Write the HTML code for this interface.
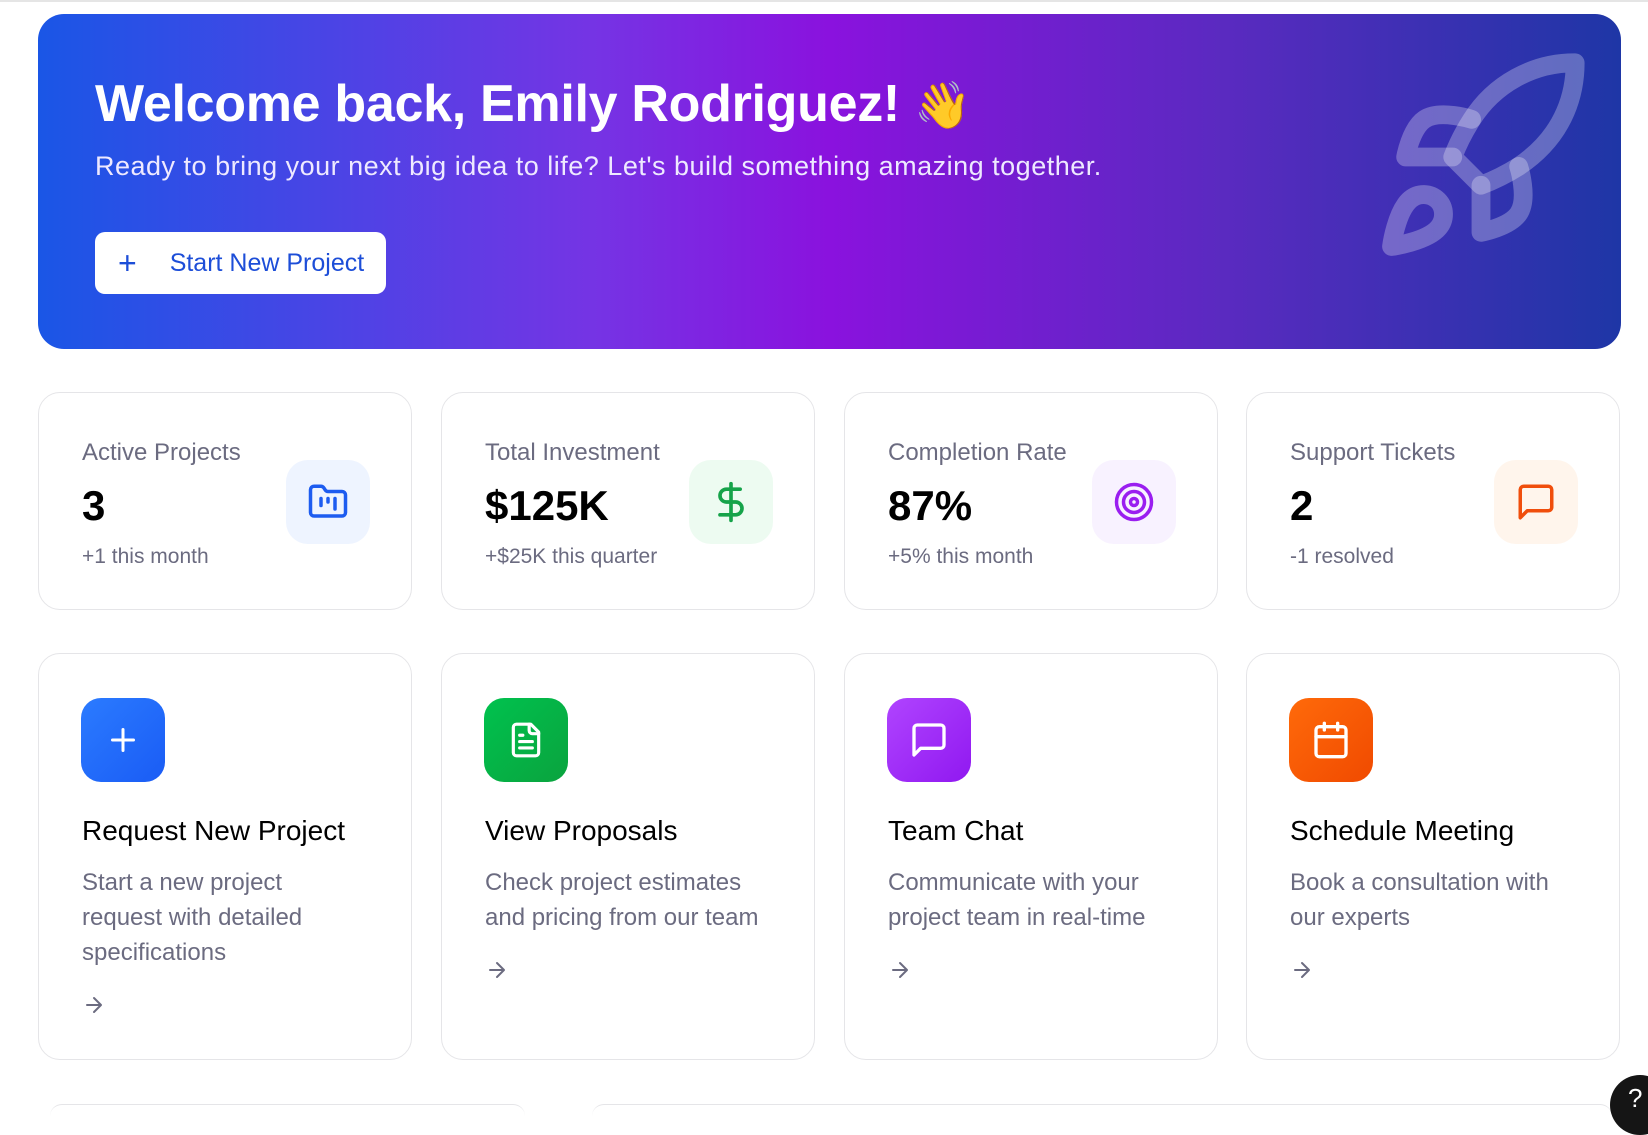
<!DOCTYPE html>
<html><head><meta charset="utf-8"><style>
*{box-sizing:border-box;margin:0;padding:0}
body{width:1648px;height:1105px;overflow:hidden;background:#fff;font-family:"Liberation Sans",sans-serif;position:relative;border-top:2px solid #e5e5e5}
.banner{position:absolute;left:38px;top:12px;width:1583px;height:335px;border-radius:26px;background:linear-gradient(90deg,#1a56e6 0%,#7534e4 35%,#8a12de 50%,#5a2ac0 75%,#1e36a6 100%);overflow:hidden}
.banner h1{position:absolute;left:57px;top:60px;font-size:52px;font-weight:700;color:#fff;letter-spacing:-0.3px}
.banner p{position:absolute;left:57px;top:137px;font-size:27px;letter-spacing:0.5px;color:#eee9ff}
.btn{position:absolute;left:57px;top:218px;width:291px;height:62px;background:#fff;border-radius:10px;color:#1d4ed8;font-size:25px;display:flex;align-items:center}
.btn span.p{font-size:32px;margin:0 33px 0 23px;font-weight:300;line-height:1}
.rocket{position:absolute;left:1330px;top:30px}
.card{position:absolute;border:1px solid #e5e5e8;border-radius:22px;background:#fff}
.stat{top:390px;width:374px;height:218px}
.stat .l{position:absolute;left:43px;top:46px;font-size:24px;color:#6b6b80}
.stat .v{position:absolute;left:43px;top:89px;font-size:42px;font-weight:700;color:#000}
.stat .s{position:absolute;left:43px;top:152px;font-size:21px;color:#6b6b80}
.stat .ic{position:absolute;left:247px;top:67px;width:84px;height:84px;border-radius:22px;display:flex;align-items:center;justify-content:center}
.act{top:651px;width:374px;height:407px}
.act .ic{position:absolute;left:42px;top:44px;width:84px;height:84px;border-radius:20px;display:flex;align-items:center;justify-content:center}
.act .t{position:absolute;left:43px;top:161px;font-size:28px;color:#000}
.act .d{position:absolute;left:43px;top:211px;width:286px;font-size:24px;line-height:35px;color:#6b6b80}
.act .a{position:absolute;left:43px}
</style></head><body>
<div class="banner">
<h1>Welcome back, Emily Rodriguez! <span style="font-family:'Noto Color Emoji','DejaVu Sans',sans-serif;font-size:46px">👋</span></h1>
<p>Ready to bring your next big idea to life? Let's build something amazing together.</p>
<div class="btn"><span class="p">+</span>Start New Project</div>
<svg class="rocket" width="226" height="226" viewBox="0 0 24 24" fill="none" stroke="rgba(255,255,255,0.28)" stroke-width="2" stroke-linecap="round" stroke-linejoin="round"><path d="M4.5 16.5c-1.5 1.26-2 5-2 5s3.74-.5 5-2c.71-.84.7-2.13-.09-2.91a2.18 2.18 0 0 0-2.91-.09z"/><path d="M12 15l-3-3a22 22 0 0 1 2-3.95A12.88 12.88 0 0 1 22 2c0 2.72-.78 7.5-6 11a22.35 22.35 0 0 1-4 2z"/><path d="M9 12H4s.55-3.03 2-4c1.62-1.08 5 0 5 0"/><path d="M12 15v5s3.03-.55 4-2c1.08-1.620 0-5 0-5"/></svg>
</div>

<div class="card stat" style="left:38px"><div class="l">Active Projects</div><div class="v">3</div><div class="s">+1 this month</div>
<div class="ic" style="background:#eef4ff"><svg width="42" height="42" viewBox="0 0 24 24" fill="none" stroke="#1d5cf0" stroke-width="2" stroke-linecap="round" stroke-linejoin="round"><path d="M4 20h16a2 2 0 0 0 2-2V8a2 2 0 0 0-2-2h-7.9a2 2 0 0 1-1.7-.9l-.8-1.2A2 2 0 0 0 7.9 3H4a2 2 0 0 0-2 2v13a2 2 0 0 0 2 2z"/><path d="M8 10v4M12 10v2M16 10v6"/></svg></div></div>
<div class="card stat" style="left:441px"><div class="l">Total Investment</div><div class="v">$125K</div><div class="s">+$25K this quarter</div>
<div class="ic" style="background:#edfbf1"><svg width="44" height="44" viewBox="0 0 24 24" fill="none" stroke="#16a34a" stroke-width="2" stroke-linecap="round" stroke-linejoin="round"><path d="M12 2v20M17 5H9.5a3.5 3.5 0 0 0 0 7h5a3.5 3.5 0 0 1 0 7H6"/></svg></div></div>
<div class="card stat" style="left:844px"><div class="l">Completion Rate</div><div class="v">87%</div><div class="s">+5% this month</div>
<div class="ic" style="background:#f8f2ff"><svg width="42" height="42" viewBox="0 0 24 24" fill="none" stroke="#9a1ef0" stroke-width="2"><circle cx="12" cy="12" r="10"/><circle cx="12" cy="12" r="6"/><circle cx="12" cy="12" r="2"/></svg></div></div>
<div class="card stat" style="left:1246px"><div class="l">Support Tickets</div><div class="v">2</div><div class="s">-1 resolved</div>
<div class="ic" style="background:#fff5ec"><svg width="42" height="42" viewBox="0 0 24 24" fill="none" stroke="#f04e0c" stroke-width="2" stroke-linecap="round" stroke-linejoin="round"><path d="M21 15a2 2 0 0 1-2 2H7l-4 4V5a2 2 0 0 1 2-2h14a2 2 0 0 1 2 2z"/></svg></div></div>

<div class="card act" style="left:38px"><div class="ic" style="background:linear-gradient(135deg,#2b7bff,#1a5cf5)"><svg width="36" height="36" viewBox="0 0 24 24" fill="none" stroke="#fff" stroke-width="2" stroke-linecap="round"><path d="M12 5v14M5 12h14"/></svg></div>
<div class="t">Request New Project</div><div class="d">Start a new project request with detailed specifications</div><div class="a" style="top:339px"><svg width="24" height="24" viewBox="0 0 24 24" fill="none" stroke="#6b6b80" stroke-width="2" stroke-linecap="round" stroke-linejoin="round"><path d="M5 12h14M12 5l7 7-7 7"/></svg></div></div>
<div class="card act" style="left:441px"><div class="ic" style="background:linear-gradient(135deg,#00c24e,#0aa33e)"><svg width="38" height="38" viewBox="0 0 24 24" fill="none" stroke="#fff" stroke-width="2" stroke-linecap="round" stroke-linejoin="round"><path d="M15 2H6a2 2 0 0 0-2 2v16a2 2 0 0 0 2 2h12a2 2 0 0 0 2-2V7z"/><path d="M14 2v4a2 2 0 0 0 2 2h4M10 9H8M16 13H8M16 17H8"/></svg></div>
<div class="t">View Proposals</div><div class="d">Check project estimates and pricing from our team</div><div class="a" style="top:304px"><svg width="24" height="24" viewBox="0 0 24 24" fill="none" stroke="#6b6b80" stroke-width="2" stroke-linecap="round" stroke-linejoin="round"><path d="M5 12h14M12 5l7 7-7 7"/></svg></div></div>
<div class="card act" style="left:844px"><div class="ic" style="background:linear-gradient(135deg,#b044ff,#9018f0)"><svg width="40" height="40" viewBox="0 0 24 24" fill="none" stroke="#fff" stroke-width="2" stroke-linecap="round" stroke-linejoin="round"><path d="M21 15a2 2 0 0 1-2 2H7l-4 4V5a2 2 0 0 1 2-2h14a2 2 0 0 1 2 2z"/></svg></div>
<div class="t">Team Chat</div><div class="d">Communicate with your project team in real-time</div><div class="a" style="top:304px"><svg width="24" height="24" viewBox="0 0 24 24" fill="none" stroke="#6b6b80" stroke-width="2" stroke-linecap="round" stroke-linejoin="round"><path d="M5 12h14M12 5l7 7-7 7"/></svg></div></div>
<div class="card act" style="left:1246px"><div class="ic" style="background:linear-gradient(135deg,#ff6a0a,#f04a00)"><svg width="40" height="40" viewBox="0 0 24 24" fill="none" stroke="#fff" stroke-width="2" stroke-linecap="round" stroke-linejoin="round"><rect x="3" y="4" width="18" height="18" rx="2"/><path d="M16 2v4M8 2v4M3 10h18"/></svg></div>
<div class="t">Schedule Meeting</div><div class="d">Book a consultation with our experts</div><div class="a" style="top:304px"><svg width="24" height="24" viewBox="0 0 24 24" fill="none" stroke="#6b6b80" stroke-width="2" stroke-linecap="round" stroke-linejoin="round"><path d="M5 12h14M12 5l7 7-7 7"/></svg></div></div>

<div style="position:absolute;left:50px;top:1102px;width:475px;height:20px;border-top:1px solid #e5e5e8;border-radius:12px 12px 0 0"></div>
<div style="position:absolute;left:592px;top:1102px;width:1020px;height:20px;border-top:1px solid #e5e5e8;border-radius:12px 12px 0 0"></div>
<div style="position:absolute;left:1610px;top:1073px;width:60px;height:60px;border-radius:50%;background:#151515;color:#fff;font-size:26px;padding:8px 0 0 18px">?</div>
</body></html>
